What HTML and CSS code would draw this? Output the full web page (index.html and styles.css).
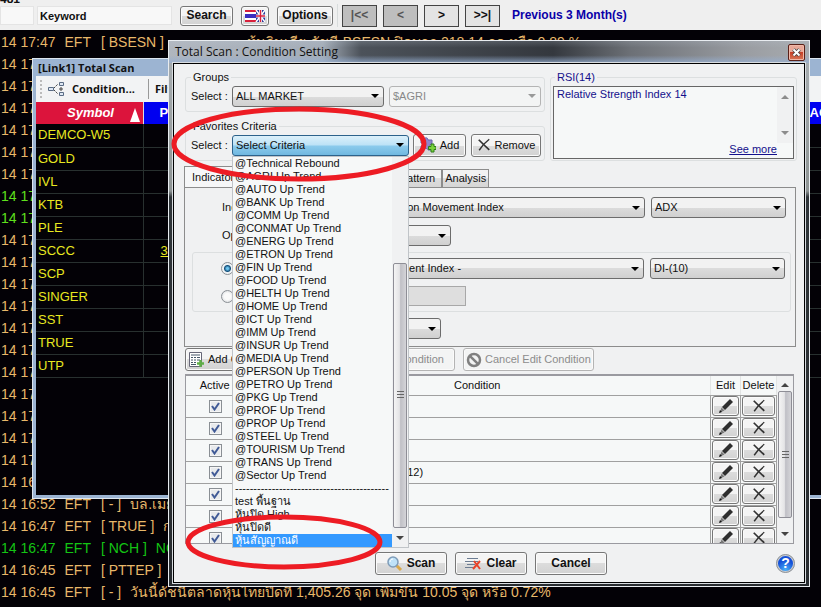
FILE: index.html
```html
<!DOCTYPE html>
<html lang="th">
<head>
    <meta charset="UTF-8">
    <meta name="viewport" content="width=device-width, initial-scale=1.0">
    <title>Total Scan</title>
    <link rel="stylesheet" href="styles.css">
</head>
<body>
    <!-- shared icons -->
    <svg class="sprite" aria-hidden="true">
        <symbol id="pencil" viewBox="0 0 16 16">
            <path d="M12 1l3 3-8 8-3-3z" fill="#2e2e2e"/>
            <path d="M3.500 9.500l3 3-4.500 2z" fill="#777"/>
            <path d="M1 15l1-3 2 2z" fill="#111"/>
        </symbol>
        <symbol id="cross" viewBox="0 0 16 16">
            <path d="M2 2c3 3 7 7 12 11.500" stroke="#333" stroke-width="2" fill="none"/>
            <path d="M14 1.500c-4 3-8 7-11.500 12.500" stroke="#333" stroke-width="1.600" fill="none"/>
        </symbol>
    </svg>

    <div class="cut-line">481</div>
    <header class="toolbar">
        <input class="field field-code" type="text" aria-label="Code">
        <input class="field field-keyword" type="text" value="Keyword" aria-label="Keyword">
        <button class="btn btn-bold btn-search">Search</button>
        <button class="btn btn-flag" aria-label="Language">
            <svg width="20" height="12" viewBox="0 0 20 12">
                <rect width="20" height="12" fill="#fff"/>
                <path d="M0 0h11v2H0zM0 10h11v2H0z" fill="#d8203c"/>
                <path d="M0 4h11v4H0z" fill="#3a2ec0"/>
                <rect x="11" width="9" height="12" fill="#2a3c9c"/>
                <path d="M11 0l9 12M20 0l-9 12" stroke="#fff" stroke-width="1.500"/>
                <path d="M15.500 0v12M11 6h9" stroke="#fff" stroke-width="3"/>
                <path d="M15.500 0v12M11 6h9" stroke="#d8203c" stroke-width="1.500"/>
            </svg>
        </button>
        <button class="btn btn-bold btn-options">Options</button>
        <span class="toolbar-sep"></span>
        <nav class="pager">
            <button class="page-btn" disabled>|&lt;&lt;</button>
            <button class="page-btn" disabled>&lt;</button>
            <button class="page-btn">&gt;</button>
            <button class="page-btn">&gt;&gt;|</button>
        </nav>
        <span class="range">Previous 3 Month(s)</span>
    </header>

    <main class="desktop">
        <ul class="feed">
            <li><span>14 17:47</span><span>EFT</span><span>[ BSESN ]</span><span class="feed-text-far">หุ้นอินเดีย ดัชนี BSESN ปิดบวก 218.14 จุด หรือ 0.89 %</span></li>
            <li><span>14 17:45</span></li>
            <li><span>14 17:44</span></li>
            <li><span>14 17:42</span></li>
            <li><span>14 17:40</span></li>
            <li><span>14 17:39</span></li>
            <li><span>14 17:38</span></li>
            <li class="up"><span>14 17:36</span></li>
            <li class="up"><span>14 17:36</span></li>
            <li><span>14 17:33</span></li>
            <li><span>14 17:31</span></li>
            <li><span>14 17:30</span></li>
            <li><span>14 17:28</span></li>
            <li><span>14 17:25</span></li>
            <li><span>14 17:22</span></li>
            <li><span>14 17:20</span></li>
            <li><span>14 17:15</span></li>
            <li><span>14 17:12</span></li>
            <li><span>14 17:08</span></li>
            <li><span>14 17:04</span></li>
            <li><span>14 16:58</span></li>
            <li><span>14 16:52</span><span>EFT</span><span>[ - ]</span><span>บล.เมย์แบงก์</span></li>
            <li><span>14 16:47</span><span>EFT</span><span>[ TRUE ]</span><span>กลุ่มทรู</span></li>
            <li class="up-dark"><span>14 16:47</span><span>EFT</span><span>[ NCH ]</span><span>NCH</span></li>
            <li><span>14 16:45</span><span>EFT</span><span>[ PTTEP ]</span></li>
            <li><span>14 16:45</span><span>EFT</span><span>[ - ]</span><span>วันนี้ดัชนีตลาดหุ้นไทยปิดที่ 1,405.26 จุด เพิ่มขึ้น 10.05 จุด หรือ 0.72%</span></li>
        </ul>

        <!-- result window -->
        <section class="scan-window">
            <h2 class="scan-title">[Link1] Total Scan</h2>
            <div class="scan-tools">
                <span class="grip"></span>
                <button class="tool-btn">
                    <svg width="18" height="16" viewBox="0 0 18 16" fill="none">
                        <path d="M1.500 6.500h5v3h-5zM12.500 1.500h4v3h-4zM12.500 11.500h4v3h-4z" stroke="#5a6c84" fill="#dfe8f4"/>
                        <path d="M7 7l4-4M7 9l4 4" stroke="#444" stroke-dasharray="2 1"/>
                        <path d="M14 6v4M12 8h4" stroke="#444"/>
                    </svg>
                    Condition...
                </button>
                <button class="tool-btn tool-filter">Filter</button>
            </div>
            <table class="symbols">
                <thead>
                    <tr><th class="col-symbol"><span>Symbol</span><i class="sort"></i></th><th>Prior</th><th class="col-acc">ACC</th></tr>
                </thead>
                <tbody>
                    <tr><td>DEMCO-W5</td><td></td><td></td></tr>
                    <tr><td>GOLD</td><td></td><td></td></tr>
                    <tr><td>IVL</td><td></td><td></td></tr>
                    <tr><td>KTB</td><td></td><td></td></tr>
                    <tr><td>PLE</td><td></td><td></td></tr>
                    <tr><td>SCCC</td><td><u>396</u></td><td></td></tr>
                    <tr><td>SCP</td><td></td><td></td></tr>
                    <tr><td>SINGER</td><td></td><td></td></tr>
                    <tr><td>SST</td><td></td><td></td></tr>
                    <tr><td>TRUE</td><td></td><td></td></tr>
                    <tr><td>UTP</td><td></td><td></td></tr>
                </tbody>
            </table>
        </section>

        <!-- condition dialog -->
        <section class="dialog" role="dialog" aria-labelledby="dialog-title">
            <header class="dialog-bar">
                <h1 id="dialog-title">Total Scan : Condition Setting</h1>
                <button class="close" aria-label="Close">
                    <svg width="9" height="9" viewBox="0 0 9 9"><path d="M1.500 1.500l6 6M7.500 1.500l-6 6" stroke="#444" stroke-width="3.600"/><path d="M1.500 1.500l6 6M7.500 1.500l-6 6" stroke="#fff" stroke-width="2"/></svg>
                </button>
            </header>
            <div class="dialog-body">
                <div class="top">
                    <div class="top-left">
                        <fieldset class="group">
                            <legend>Groups</legend>
                            <div class="group-row">
                                <label for="market">Select :</label>
                                <select id="market" class="combo grow"><option>ALL MARKET</option></select>
                                <select class="combo grow" aria-label="Sector" disabled><option>$AGRI</option></select>
                            </div>
                        </fieldset>
                        <fieldset class="group">
                            <legend>Favorites Criteria</legend>
                            <div class="group-row">
                                <label for="criteria">Select :</label>
                                <div class="dropdown">
                                    <select id="criteria" class="combo combo-open"><option>Select Criteria</option></select>
                                    <div class="dropdown-panel">
                                        <ul class="options" role="listbox" aria-label="Criteria">
                                            <li role="option">@Technical Rebound</li>
                                            <li role="option">@AGRI Up Trend</li>
                                            <li role="option">@AUTO Up Trend</li>
                                            <li role="option">@BANK Up Trend</li>
                                            <li role="option">@COMM Up Trend</li>
                                            <li role="option">@CONMAT Up Trend</li>
                                            <li role="option">@ENERG Up Trend</li>
                                            <li role="option">@ETRON Up Trend</li>
                                            <li role="option">@FIN Up Trend</li>
                                            <li role="option">@FOOD Up Trend</li>
                                            <li role="option">@HELTH Up Trend</li>
                                            <li role="option">@HOME Up Trend</li>
                                            <li role="option">@ICT Up Trend</li>
                                            <li role="option">@IMM Up Trend</li>
                                            <li role="option">@INSUR Up Trend</li>
                                            <li role="option">@MEDIA Up Trend</li>
                                            <li role="option">@PERSON Up Trend</li>
                                            <li role="option">@PETRO Up Trend</li>
                                            <li role="option">@PKG Up Trend</li>
                                            <li role="option">@PROF Up Trend</li>
                                            <li role="option">@PROP Up Trend</li>
                                            <li role="option">@STEEL Up Trend</li>
                                            <li role="option">@TOURISM Up Trend</li>
                                            <li role="option">@TRANS Up Trend</li>
                                            <li role="option">@Sector Up Trend</li>
                                            <li role="option">------------------------------------------</li>
                                            <li role="option">test พื้นฐาน</li>
                                            <li role="option">หุ้นปิด High</li>
                                            <li role="option">หุ้นปิดดี</li>
                                            <li role="option" class="picked" aria-selected="true">หุ้นสัญญาณดี</li>
                                        </ul>
                                        <div class="scroll scroll-list">
                                            <span class="thumb"></span>
                                            <i class="arrow-down"></i>
                                        </div>
                                    </div>
                                </div>
                                <button class="btn btn-add">
                                    <svg width="16" height="16" viewBox="0 0 16 16">
                                        <path d="M1 3h3c0-3 4-3 4 0h4v4c-3 0-3 3 0 3v3H8c0-2-4-2-4 0H1V9c2 0 2-3 0-3z" fill="#8f86cc" stroke="#6a62ac"/>
                                        <path d="M11 7h3v2.500h2v3h-2V15h-3v-2.500H8.500v-3H11z" fill="#7bd23c" stroke="#2f7d1c"/>
                                    </svg>
                                    Add
                                </button>
                                <button class="btn btn-remove"><svg width="14" height="16"><use href="#cross"/></svg>Remove</button>
                            </div>
                        </fieldset>
                    </div>
                    <fieldset class="group rsi">
                        <legend>RSI(14)</legend>
                        <div class="rsi-box">
                            <div class="rsi-text"><p>Relative Strength Index 14</p><a href="#more">See more</a></div>
                            <div class="scroll scroll-off"><i class="arrow-up"></i><i class="arrow-down"></i></div>
                        </div>
                    </fieldset>
                </div>

                <div class="tabs" role="tablist">
                    <button class="tab tab-on" role="tab" aria-selected="true">Indicator</button>
                    <button class="tab tab-wide" role="tab">Candlestick</button>
                    <button class="tab tab-wide" role="tab">Price Pattern</button>
                    <button class="tab" role="tab">Analysis</button>
                </div>
                <div class="panel">
                    <div class="line">
                        <label for="indicator">Indicator :</label>
                        <select id="indicator" class="combo grow"><option>ADX : Average True Direction Movement Index</option></select>
                        <select class="combo combo-value" aria-label="Indicator value"><option>ADX</option></select>
                    </div>
                    <div class="line">
                        <label for="operator">Option :</label>
                        <select id="operator" class="combo combo-operator"><option>&gt;</option></select>
                    </div>
                    <div class="compare">
                        <div class="line">
                            <label class="radio"><input type="radio" name="target" checked aria-label="Indicator"></label>
                            <select class="combo grow" aria-label="Compare indicator"><option>Average - Direction Movement Index -</option></select>
                            <select class="combo combo-value" aria-label="Compare value"><option>DI-(10)</option></select>
                        </div>
                        <div class="line">
                            <label class="radio"><input type="radio" name="target" aria-label="Number"></label>
                            <input class="number" type="text" disabled aria-label="Number value">
                        </div>
                    </div>
                    <div class="line line-period">
                        <select class="combo combo-period" aria-label="Period"><option>Day</option></select>
                    </div>
                </div>

                <div class="actions">
                    <button class="btn">
                        <svg width="17" height="17" viewBox="0 0 17 17">
                            <path d="M1.500 1.500h12v14h-12z" fill="#fff" stroke="#667"/>
                            <path d="M3 4h9M3 6.500h2M6 6.500h2M9 6.500h3M3 9h2M6 9h2M9 9h3M3 11.500h2M6 11.500h2M3 13.500h5" stroke="#456"/>
                            <path d="M12.500 9v7M9 12.500h7" stroke="#5fae48" stroke-width="2.500"/>
                        </svg>
                        Add Condition
                    </button>
                    <button class="btn btn-end" disabled>Update Condition</button>
                    <button class="btn" disabled>
                        <svg width="16" height="16" viewBox="0 0 16 16" fill="none" stroke="#808080" stroke-width="2.500"><circle cx="8" cy="8" r="6"/><path d="M3.800 3.800l8.400 8.400"/></svg>
                        Cancel Edit Condition
                    </button>
                </div>

                <div class="grid">
                    <table class="conditions">
                        <thead>
                            <tr><th class="col-active">Active</th><th>Condition</th><th class="col-edit">Edit</th><th class="col-delete">Delete</th></tr>
                        </thead>
                        <tbody>
                            <tr><td><input type="checkbox" checked aria-label="Active"></td><td></td><td><button class="btn cell-btn" aria-label="Edit"><svg width="16" height="16"><use href="#pencil"/></svg></button></td><td><button class="btn cell-btn" aria-label="Delete"><svg width="14" height="14"><use href="#cross"/></svg></button></td></tr>
                            <tr><td><input type="checkbox" checked aria-label="Active"></td><td></td><td><button class="btn cell-btn" aria-label="Edit"><svg width="16" height="16"><use href="#pencil"/></svg></button></td><td><button class="btn cell-btn" aria-label="Delete"><svg width="14" height="14"><use href="#cross"/></svg></button></td></tr>
                            <tr><td><input type="checkbox" checked aria-label="Active"></td><td></td><td><button class="btn cell-btn" aria-label="Edit"><svg width="16" height="16"><use href="#pencil"/></svg></button></td><td><button class="btn cell-btn" aria-label="Delete"><svg width="14" height="14"><use href="#cross"/></svg></button></td></tr>
                            <tr><td><input type="checkbox" checked aria-label="Active"></td><td class="rule">MACD(12,26) Cross Above EMA(12)</td><td><button class="btn cell-btn" aria-label="Edit"><svg width="16" height="16"><use href="#pencil"/></svg></button></td><td><button class="btn cell-btn" aria-label="Delete"><svg width="14" height="14"><use href="#cross"/></svg></button></td></tr>
                            <tr><td><input type="checkbox" checked aria-label="Active"></td><td></td><td><button class="btn cell-btn" aria-label="Edit"><svg width="16" height="16"><use href="#pencil"/></svg></button></td><td><button class="btn cell-btn" aria-label="Delete"><svg width="14" height="14"><use href="#cross"/></svg></button></td></tr>
                            <tr><td><input type="checkbox" checked aria-label="Active"></td><td></td><td><button class="btn cell-btn" aria-label="Edit"><svg width="16" height="16"><use href="#pencil"/></svg></button></td><td><button class="btn cell-btn" aria-label="Delete"><svg width="14" height="14"><use href="#cross"/></svg></button></td></tr>
                            <tr><td><input type="checkbox" checked aria-label="Active"></td><td></td><td><button class="btn cell-btn" aria-label="Edit"><svg width="16" height="16"><use href="#pencil"/></svg></button></td><td><button class="btn cell-btn" aria-label="Delete"><svg width="14" height="14"><use href="#cross"/></svg></button></td></tr>
                        </tbody>
                    </table>
                    <div class="scroll scroll-grid">
                        <i class="arrow-up"></i>
                        <span class="thumb"></span>
                        <i class="arrow-down"></i>
                    </div>
                </div>

                <footer class="dialog-foot">
                    <div class="foot-buttons">
                        <button class="btn btn-bold">
                            <svg width="16" height="16" viewBox="0 0 16 16"><path d="M9.500 9.500l4.500 4.500" stroke="#d8a84c" stroke-width="3"/><circle cx="6" cy="6" r="5" fill="#bfe2f8" stroke="#7f9cb8" stroke-width="1.500"/><path d="M3 6c0-2 1.500-3 3-3" stroke="#fff" fill="none"/></svg>
                            Scan
                        </button>
                        <button class="btn btn-bold">
                            <svg width="17" height="14" viewBox="0 0 17 14"><path d="M2 1.500h11M0 4.500h13M2 7.500h8M0 10.500h8" stroke="#6c7c92"/><path d="M9 4l6 8M15 4l-7 8" stroke="#e8432a" stroke-width="2"/></svg>
                            Clear
                        </button>
                        <button class="btn btn-bold">Cancel</button>
                    </div>
                    <button class="help" aria-label="Help">?</button>
                </footer>
            </div>
        </section>

        <!-- highlight marks -->
        <svg class="mark mark-select" viewBox="0 0 256 76" aria-hidden="true"><ellipse cx="128" cy="38" rx="125" ry="35"/></svg>
        <svg class="mark mark-option" viewBox="0 0 198 56" aria-hidden="true"><ellipse cx="99" cy="28" rx="96" ry="25"/></svg>
    </main>
</body>
</html>
```
FILE: styles.css
```css
* {
    box-sizing: border-box;
}

body {
    margin: 0;
    height: 100vh;
    overflow: hidden;
    display: flex;
    flex-direction: column;
    background: #030106;
    color: #111;
    font: 11px/13px "Liberation Sans", Arial, sans-serif;
}

button, input, select {
    margin: 0;
    font: inherit;
    color: inherit;
}

ul {
    margin: 0;
    padding: 0;
    list-style: none;
}

.sprite {
    position: absolute;
    width: 0;
    height: 0;
}

/* Toolbar */
.cut-line {
    height: 4px;
    display: flex;
    align-items: flex-end;
    overflow: hidden;
    background: #efefef;
    font-size: 12px;
    line-height: 9px;
    font-weight: bold;
}

.toolbar {
    height: 26px;
    flex: none;
    display: flex;
    align-items: center;
    background: #efefef;
    padding-bottom: 3px;
}

.field {
    height: 19px;
    border: 1px solid #e4e4e4;
    background: #f8f8f8;
    padding: 0 2px;
    font-weight: bold;
}

.field-code {
    width: 34px;
    margin-right: 3px;
}

.field-keyword {
    width: 135px;
    margin-right: 8px;
}

.btn {
    display: flex;
    align-items: center;
    justify-content: center;
    gap: 4px;
    padding: 0 3px;
    border: 1px solid #777;
    border-radius: 3px;
    background: linear-gradient(#f4f4f4 50%, #dcdcdc 50%, #d2d2d2);
    box-shadow: inset 0 0 0 1px #fbfbfb;
    white-space: nowrap;
}

.btn:disabled {
    border-color: #b4b4b4;
    background: #f3f4f4;
    color: #8c8c8c;
}

.btn svg {
    flex: none;
}

.btn-bold {
    font-size: 12px;
    font-weight: bold;
}

.btn-search, .btn-flag, .btn-options {
    height: 20px;
    margin-right: 8px;
}

.btn-search {
    width: 53px;
}

.btn-flag {
    width: 28px;
}

.btn-options {
    width: 56px;
    margin-right: 4px;
}

.toolbar-sep {
    align-self: stretch;
    border-left: 1px solid #d8dcdc;
    margin-right: 4px;
}

.pager {
    display: flex;
    gap: 6px;
}

.page-btn {
    width: 35px;
    height: 22px;
    padding: 0;
    border: 1px solid #444;
    background: #e4e4e4;
    font-size: 12px;
    font-weight: bold;
}

.page-btn:disabled {
    background: #bebebe;
    color: #555;
}

.range {
    margin-left: 12px;
    color: #0a00a8;
    font-size: 12px;
    font-weight: bold;
}

/* News feed */
.desktop {
    position: relative;
    flex: 1;
    overflow: hidden;
}

.feed {
    padding-top: 1px;
    color: #e8b86a;
    font-size: 14px;
    line-height: 22px;
}

.feed li {
    display: flex;
    gap: 9px;
    padding-left: 1px;
    white-space: pre;
}

.feed li span:nth-child(3) {
    margin-left: 1px;
}

.feed li.up {
    color: #5ee01c;
}

.feed li.up-dark {
    color: #14c414;
}

.feed-text-far {
    margin-left: 74px;
}

/* Result window */
.scan-window {
    position: absolute;
    top: 28px;
    left: 32px;
    right: -64px;
    height: 441px;
    border: solid #9cb4d2;
    border-width: 1px 4px 4px;
    outline: 1px solid #dde6f0;
    outline-offset: -1px;
    background: #030106;
}

.scan-title {
    margin: 0;
    height: 17px;
    padding-left: 2px;
    background: #9cb4d2;
    font: bold 11px/17px "Open Sans", sans-serif;
}

.scan-tools {
    height: 26px;
    display: flex;
    align-items: center;
    background: #f2f3f4;
    font: bold 11px/14px "Open Sans", sans-serif;
}

.grip {
    height: 18px;
    margin-left: 4px;
    border-left: 2px dotted #bbb;
}

.tool-btn {
    display: flex;
    align-items: center;
    gap: 7px;
    padding: 0 0 0 5px;
    border: 0;
    background: none;
}

.tool-filter {
    margin-left: 13px;
    height: 20px;
    padding-left: 6px;
    border-left: 1px solid #999;
}

.symbols {
    width: 100%;
    table-layout: fixed;
    border-collapse: collapse;
    font-size: 13px;
    line-height: 16px;
}

.symbols th {
    height: 22px;
    padding: 0 0 0 16px;
    background: #0000f0;
    color: #fff;
    text-align: left;
    font-weight: bold;
}

.symbols .col-symbol {
    width: 107px;
    padding: 0 3px 0 31px;
    background: #dc143c;
    font-style: italic;
    border-right: 1px solid #ddd;
}

.symbols .col-acc {
    width: 76px;
    padding-left: 5px;
}

.sort {
    float: right;
    margin-top: 3px;
    border: solid transparent;
    border-width: 0 5px 14px;
    border-bottom-color: #fff;
}

.symbols td {
    height: 23px;
    padding: 0 0 0 2px;
    border-bottom: 1px solid #28302f;
    border-right: 1px solid #28302f;
    color: #e8e820;
}

.symbols td:nth-child(2) {
    padding-left: 17px;
}

/* Dialog frame */
.dialog {
    position: absolute;
    top: 10px;
    left: 168px;
    right: 11px;
    padding: 0 4px 3px;
    border: 1px solid #e8ecf0;
    background: linear-gradient(#aab0b4, #8e9494 150px, #30363a 156px, #282c30);
}

.dialog-bar {
    display: flex;
    align-items: center;
    justify-content: space-between;
    height: 22px;
    margin: 0 -4px;
    padding: 0 4px 0 6px;
    background:
        linear-gradient(rgba(190, 200, 212, 0.2), transparent 30%, transparent 65%, rgba(150, 175, 210, 0.8)),
        linear-gradient(90deg, #b0b6be, #a4adb8 24%, #4c525a 30%, #34383e 60%, #6c7076 72%, #9a9da2 90%, #a8acb0);
}

.dialog-bar h1 {
    margin: 0;
    font: 12px/16px "Open Sans", sans-serif;
}

.close {
    display: flex;
    align-items: center;
    justify-content: center;
    width: 17px;
    height: 17px;
    padding: 0;
    border: 1px solid #5a2018;
    border-radius: 2px;
    background: linear-gradient(#e8a898 45%, #c84028 50%, #d87858);
    box-shadow: inset 0 0 0 1px #f0b8a8;
}

.dialog-body {
    padding: 6px 7px 7px 11px;
    border: 1px solid #000;
    outline: 1px solid #d8dce0;
    background: #f0f1f2;
}

.top {
    display: grid;
    grid-template-columns: 360px 1fr;
    gap: 5px;
}

.top-left {
    display: grid;
    gap: 7px;
}

.group {
    min-width: 0;
    margin: 0;
    padding: 0 3px 3px 5px;
    border: 1px solid #dcdfe0;
    border-radius: 3px;
}

.group legend {
    height: 14px;
    padding: 0 2px;
    line-height: 14px;
}

.group-row {
    display: flex;
    align-items: center;
    gap: 5px;
    height: 24px;
}

.group-row label {
    width: 36px;
    white-space: nowrap;
}

.grow {
    flex: 1;
    min-width: 0;
}

.combo {
    appearance: none;
    height: 21px;
    padding: 0 16px 0 3px;
    border: 1px solid #6c6c6c;
    border-radius: 3px;
    background:
        url("data:image/svg+xml,%3Csvg xmlns='http://www.w3.org/2000/svg' width='8' height='4'%3E%3Cpath d='M0 0h8L4 4z'/%3E%3C/svg%3E") no-repeat right 4px center,
        linear-gradient(#f2f2f2 50%, #dcdcdc 50%, #d0d0d0);
    text-overflow: ellipsis;
}

.combo:disabled {
    border-color: #b4b4b4;
    background:
        url("data:image/svg+xml,%3Csvg xmlns='http://www.w3.org/2000/svg' width='8' height='4'%3E%3Cpath d='M0 0h8L4 4z' fill='%23999'/%3E%3C/svg%3E") no-repeat right 4px center,
        #f3f4f4;
    color: #888;
    opacity: 1;
}

.combo-open {
    width: 100%;
    border-color: #2c628b;
    background:
        url("data:image/svg+xml,%3Csvg xmlns='http://www.w3.org/2000/svg' width='8' height='4'%3E%3Cpath d='M0 0h8L4 4z'/%3E%3C/svg%3E") no-repeat right 4px center,
        linear-gradient(#dcf0fa, #bce2f6 48%, #8ccbec 52%, #70b8e0);
}

/* Criteria dropdown */
.dropdown {
    position: relative;
    width: 177px;
}

.dropdown-panel {
    position: absolute;
    z-index: 2;
    top: 100%;
    left: 0;
    right: 0;
    display: flex;
    border: 1px solid #c0c4c8;
    background: #f6f8f8;
}

.options {
    flex: 1;
    min-width: 0;
    overflow: hidden;
}

.options li {
    height: 13px;
    padding-left: 2px;
    white-space: nowrap;
}

.options .picked {
    background: #3399ff;
    color: #fff;
}

/* Scroll bars */
.scroll {
    display: flex;
    flex-direction: column;
    align-items: center;
    width: 16px;
    background: #f0f1f2;
}

.thumb {
    display: flex;
    flex: none;
    width: 14px;
    border: 1px solid #8e8e96;
    border-radius: 2px;
    background:
        repeating-linear-gradient(#666 0 1px, transparent 1px 3px) no-repeat center / 7px 8px,
        linear-gradient(90deg, #f4f4f4, #e4e4e6 45%, #c0c0c6 55%, #d4d4d8);
}

.arrow-up, .arrow-down {
    border: 4px solid transparent;
}

.arrow-up {
    border-top: 0;
    border-bottom-color: #444;
}

.arrow-down {
    border-bottom: 0;
    border-top-color: #444;
}

.scroll-list {
    justify-content: space-between;
    padding: 106px 0 7px;
}

.scroll-list .thumb {
    height: 265px;
}

.scroll-off {
    height: 56px;
    justify-content: space-between;
    padding: 8px 0;
}

.scroll-off .arrow-up {
    border-bottom-color: #8c8c8c;
}

.scroll-off .arrow-down {
    border-top-color: #8c8c8c;
}

.scroll-grid {
    justify-content: space-between;
    padding: 7px 0 7px;
}

.scroll-grid .thumb {
    height: 127px;
    margin-bottom: 10px;
}

/* Buttons beside the dropdown */
.btn-add, .btn-remove {
    height: 23px;
}

.btn-add {
    width: 53px;
    margin-left: -1px;
}

.btn-remove {
    flex: 1;
}

.rsi {
    padding: 2px 2px 1px;
    color: #14108c;
}

.rsi legend {
    margin-left: 2px;
}

.rsi-box {
    display: flex;
    height: 73px;
    border: 1px solid #666;
    background: #f6f8f8;
}

.rsi-text {
    flex: 1;
    display: flex;
    flex-direction: column;
    justify-content: space-between;
    padding: 1px 0 2px 3px;
}

.rsi-text p {
    margin: 0;
}

.rsi-text a {
    align-self: flex-end;
    color: #14108c;
}

/* Tabs */
.tabs {
    display: flex;
    align-items: flex-end;
    height: 21px;
    margin: 5px 0 0 -1px;
}

.tab {
    height: 18px;
    padding: 0 2px;
    border: 1px solid #8c8c8c;
    border-bottom: 0;
    background: linear-gradient(#f2f2f2 50%, #dddddd 50%, #d6d6d6);
}

.tab-on {
    height: 21px;
    padding: 0 7px;
    background: #f6f7f8;
}

.tab-wide {
    width: 100px;
    text-align: right;
    padding-right: 6px;
}

.panel {
    display: grid;
    gap: 7px;
    margin: 0 1px 0 -1px;
    padding: 9px 9px 7px 7px;
    border: 1px solid #8c8c8c;
}

.line {
    display: flex;
    align-items: center;
    gap: 6px;
    padding-left: 30px;
}

.line label {
    width: 50px;
    margin-right: -6px;
    white-space: nowrap;
}

.line-period {
    padding-left: 80px;
}

.combo-value {
    width: 135px;
}

.combo-operator {
    width: 179px;
}

.combo-period {
    width: 169px;
}

.compare {
    display: grid;
    gap: 7px;
    margin: -1px -5px -1px 0;
    padding: 5px 5px;
    border: 1px solid #dcdfe0;
    border-radius: 3px;
}

.compare .line {
    padding-left: 23px;
}

.compare .line .radio {
    width: 51px;
    height: 13px;
}

.radio input {
    appearance: none;
    display: block;
    width: 13px;
    height: 13px;
    border: 1px solid #8a8f94;
    border-radius: 50%;
    background: radial-gradient(#fafafa 40%, #d0d4d8);
}

.radio input:checked {
    background: radial-gradient(circle at 50% 50%, #6cc4ee 0 1px, #14507c 3px, #eef2f4 4px);
}

.number {
    width: 194px;
    height: 20px;
    border: 1px solid #a8a8a8;
    background: #dedede;
}

/* Edit buttons */
.actions {
    display: flex;
    gap: 8px;
    margin-top: 1px;
}

.actions .btn {
    width: 131px;
    height: 23px;
    padding: 0 2px;
    gap: 3px;
    justify-content: flex-start;
}

.actions .btn-end {
    justify-content: flex-end;
    padding-right: 10px;
}

/* Condition table */
.grid {
    display: flex;
    height: 170px;
    margin: 3px 3px 0 0;
    overflow: hidden;
    border: 1px solid #9a9aa0;
    border-top-width: 2px;
    background: #f6f8f8;
}

.conditions {
    flex: 1;
    align-self: flex-start;
    table-layout: fixed;
    border-collapse: collapse;
}

.conditions th {
    height: 19px;
    padding: 0;
    border-bottom: 1px solid #a0a0a0;
    border-right: 1px solid #e2e4e4;
    font-weight: normal;
    text-align: center;
}

.conditions td {
    height: 22px;
    padding: 0 1px;
    border-bottom: 1px solid #a0a0a0;
}

.conditions td:nth-child(n+2) {
    border-right: 1px solid #a0a0a0;
}

.conditions td:first-child {
    text-align: center;
}

.conditions .rule {
    padding-left: 0;
}

.col-active {
    width: 58px;
}

.col-edit {
    width: 30px;
}

.col-delete {
    width: 36px;
}

.conditions input {
    appearance: none;
    display: block;
    width: 13px;
    height: 13px;
    margin: 0 auto;
    border: 1px solid #8a8f94;
    background:
        url("data:image/svg+xml,%3Csvg xmlns='http://www.w3.org/2000/svg' width='9' height='9'%3E%3Cpath d='M1 4l2.500 3.500L8 1' fill='none' stroke='%23405a96' stroke-width='2'/%3E%3C/svg%3E") no-repeat center,
        #e8eaec;
    box-shadow: inset 0 0 0 1px #f6f6f6;
}

.cell-btn {
    width: 100%;
    height: 20px;
}

/* Footer */
.dialog-foot {
    display: grid;
    grid-template-columns: 1fr auto 1fr;
    align-items: center;
    margin-top: 8px;
}

.foot-buttons {
    grid-column: 2;
    display: flex;
    gap: 8px;
}

.foot-buttons .btn {
    width: 72px;
    height: 23px;
}

.help {
    justify-self: end;
    width: 19px;
    height: 19px;
    margin-right: 2px;
    padding: 0;
    border: 2px solid #c8ccd2;
    border-radius: 50%;
    outline: 1px solid #909498;
    outline-offset: -1px;
    background: radial-gradient(circle at 50% 90%, #48b0f8, #1450d8 60%);
    color: #fff;
    font-size: 14px;
    font-weight: bold;
}

/* Highlight marks */
.mark {
    position: absolute;
    z-index: 3;
    fill: none;
    stroke: #ed1c24;
    stroke-width: 5px;
    pointer-events: none;
}

.mark-select {
    top: 76px;
    left: 171px;
    width: 256px;
    height: 76px;
}

.mark-option {
    top: 484px;
    left: 185px;
    width: 198px;
    height: 56px;
}
```
